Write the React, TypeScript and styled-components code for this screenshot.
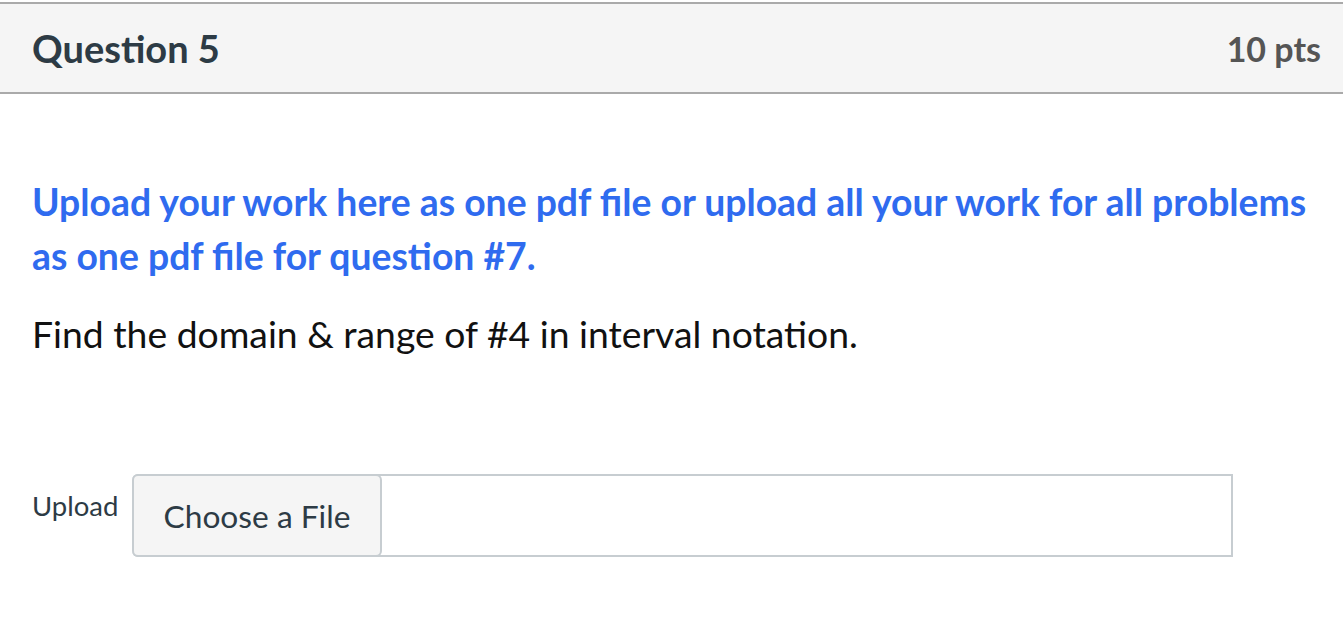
import styled, { createGlobalStyle } from "styled-components";

const GlobalStyle = createGlobalStyle`
  body {
    margin: 0;
    background: #fff;
    font-family: Lato, "Open Sans", sans-serif;
  }
`;

const Page = styled.div`
  padding-top: 2px;
`;

const Header = styled.div`
  height: 88px;
  display: flex;
  align-items: center;
  justify-content: space-between;
  padding: 0 22px 0 32px;
  background: #f5f5f5;
  border-top: 2px solid #aaaaaa;
  border-bottom: 2px solid #aaaaaa;
`;

const Title = styled.h2`
  margin: 0;
  font-size: 38px;
  font-weight: 700;
  color: #2d3b45;
`;

const Points = styled.span`
  font-size: 34px;
  font-weight: 700;
  color: #555555;
`;

const Body = styled.div`
  padding: 81px 32px 0;
`;

const Lead = styled.p`
  margin: 0;
  font-size: 37.35px;
  line-height: 54px;
  font-weight: 700;
  color: #2f6bef;
`;

const Prompt = styled.p`
  margin: 24px 0 0;
  font-size: 37.3px;
  line-height: 54px;
  color: #111111;
`;

const UploadRow = styled.div`
  display: flex;
  align-items: flex-start;
  margin-top: 113px;
`;

const Label = styled.span`
  width: 100px;
  padding-top: 15px;
  font-size: 27.5px;
  color: #2d3b45;
`;

const FileField = styled.div`
  display: flex;
  width: 1099px;
  height: 79px;
  border: 2px solid #c7cdd1;
  border-left: none;
  border-radius: 6px 0 0 6px;
`;

const ChooseButton = styled.button`
  width: 250px;
  height: 83px;
  margin-top: -2px;
  border: 2px solid #c7cdd1;
  border-radius: 6px;
  background: #f5f5f5;
  font-family: Lato, sans-serif;
  font-size: 31.7px;
  color: #2d3b45;
  padding: 0;
`;

export default function App() {
  return (
    <Page>
      <GlobalStyle />
      <Header>
        <Title>Question 5</Title>
        <Points>10 pts</Points>
      </Header>
      <Body>
        <Lead>
          Upload your work here as one pdf file or upload all your work for all
          problems as one pdf file for question #7.
        </Lead>
        <Prompt>Find the domain &amp; range of #4 in interval notation.</Prompt>
        <UploadRow>
          <Label>Upload</Label>
          <FileField>
            <ChooseButton>Choose a File</ChooseButton>
          </FileField>
        </UploadRow>
      </Body>
    </Page>
  );
}
